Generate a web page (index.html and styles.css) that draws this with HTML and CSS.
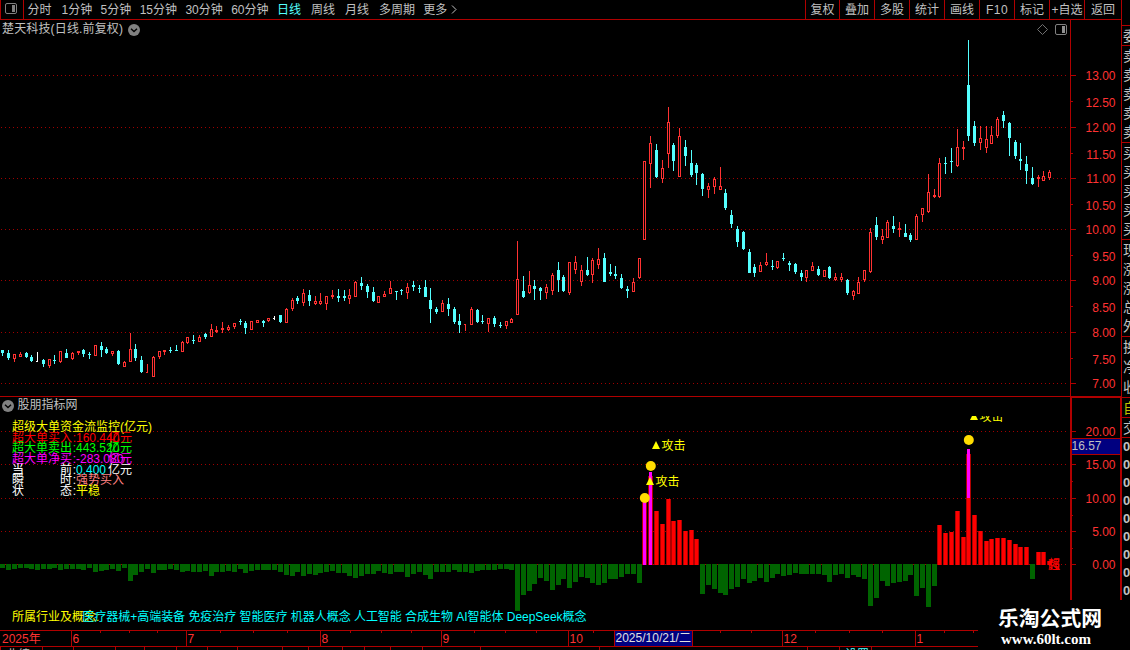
FILE: index.html
```
<!DOCTYPE html>
<html lang="zh-CN">
<head>
    <meta charset="UTF-8">
    <meta name="viewport" content="width=device-width, initial-scale=1.0">
    <title>楚天科技 日线</title>
    <link rel="stylesheet" href="styles.css">
</head>
<body>
    <div class="app">
        <div class="main">
            <div class="toolbar">
                <div class="layout-btn">
                    <svg width="12" height="11" viewBox="0 0 12 11"><rect x="0.5" y="0.5" width="11" height="10" rx="1.5" fill="none" stroke="#808080"/><rect x="7" y="2" width="3" height="7" fill="#808080"/></svg>
                </div>
                <div class="periods">
                    <span>分时</span>
                    <span>1分钟</span>
                    <span>5分钟</span>
                    <span>15分钟</span>
                    <span>30分钟</span>
                    <span>60分钟</span>
                    <span class="active">日线</span>
                    <span>周线</span>
                    <span>月线</span>
                    <span>多周期</span>
                    <span class="more">更多<svg width="6" height="9" viewBox="0 0 6 9"><path d="M1 0.5L5 4.5L1 8.5" fill="none" stroke="#c0c0c0"/></svg></span>
                </div>
                <div class="tools">
                    <span>复权</span>
                    <span>叠加</span>
                    <span>多股</span>
                    <span>统计</span>
                    <span>画线</span>
                    <span class="latin">F10</span>
                    <span>标记</span>
                    <span>+自选</span>
                    <span>返回</span>
                </div>
            </div>

            <div class="panel price-panel">
                <svg id="priceChart" width="1121" height="376" viewBox="0 20 1121 376"></svg>
                <div class="panel-title">
                    <span>楚天科技(日线.前复权)</span>
                    <svg width="12" height="12" viewBox="0 0 12 12"><circle cx="6" cy="6" r="6" fill="#808080"/><path d="M3 4.8L6 7.6L9 4.8" fill="none" stroke="#000" stroke-width="1.4"/></svg>
                </div>
                <div class="panel-icons">
                    <svg width="11" height="11" viewBox="0 0 11 11"><path d="M5.5 0.5L10.5 5.5L5.5 10.5L0.5 5.5Z" fill="none" stroke="#707070"/></svg>
                    <svg width="12" height="11" viewBox="0 0 12 11"><rect x="0.5" y="0.5" width="11" height="10" rx="1.5" fill="none" stroke="#808080"/><rect x="7" y="2" width="3" height="7" fill="#909090"/></svg>
                </div>
            </div>

            <div class="panel flow-panel">
                <svg id="flowChart" width="1121" height="233" viewBox="0 397 1121 233"></svg>
                <div class="panel-title flow-title">
                    <svg width="12" height="12" viewBox="0 0 12 12"><circle cx="6" cy="6" r="6" fill="#808080"/><path d="M3 4.8L6 7.6L9 4.8" fill="none" stroke="#000" stroke-width="1.4"/></svg>
                    <span>股朋指标网</span>
                </div>
                <div class="stats">
                    <div class="stat yellow">超级大单资金流监控(亿元)</div>
                    <div class="stat red"><b>超大单买入</b><i>:</i><em>160.440</em><u>亿元</u></div>
                    <div class="stat green"><b>超大单卖出</b><i>:</i><em>443.520</em><u>亿元</u></div>
                    <div class="stat magenta"><b>超大单净买</b><i>:</i><em>-283.080</em><u>亿元</u></div>
                    <div class="stat white"><b>当 前</b><i>:</i><em class="cyan">0.400</em><u>亿元</u></div>
                    <div class="stat white"><b>瞬 时</b><i>:</i><em class="salmon">强势买入</em></div>
                    <div class="stat white"><b>状 态</b><i>:</i><em class="yellow">平稳</em></div>
                </div>
                <div class="concepts">
                    <span class="yellow">所属行业及概念:</span>
                    <span class="concept-list">医疗器械+高端装备 免疫治疗 智能医疗 机器人概念 人工智能 合成生物 AI智能体 DeepSeek概念</span>
                </div>
            </div>

            <svg id="timeAxis" width="1121" height="20" viewBox="0 630 1121 20"></svg>
        </div>

        <div class="quote">
            <div class="group head"><span>委</span></div>
            <div class="group five"><span>卖</span><span>卖</span><span>卖</span><span>卖</span><span>卖</span></div>
            <div class="group five"><span>买</span><span>买</span><span>买</span><span>买</span><span>买</span></div>
            <div class="group five"><span>现</span><span>涨</span><span>涨</span><span>总</span><span>外</span></div>
            <div class="group three"><span>换</span><span>净</span><span>收</span></div>
            <div class="group tab yellow-dark"><span>自</span></div>
            <div class="group tab"><span>交</span></div>
            <div class="group ticks"><span>0</span><span>0</span><span>0</span><span>0</span><span>0</span><span>0</span><span>0</span><span>0</span><span>0</span></div>
        </div>

        <div class="brand">
            <div class="brand-name">乐淘公式网</div>
            <div class="brand-url">www.60lt.com</div>
        </div>
    </div>

    <script src="chart.js"></script>
</body>
</html>
```

FILE: styles.css
```
body {
    margin: 0;
    padding: 0;
    background-color: #000;
    color: #c0c0c0;
    font-family: "Liberation Sans", "Noto Sans CJK SC", sans-serif;
    font-size: 12px;
    line-height: 18px;
    overflow: hidden;
}

svg {
    display: block;
}

svg text {
    font-family: "Liberation Sans", "Noto Sans CJK SC", sans-serif;
    font-size: 12px;
}

.app {
    position: relative;
    display: grid;
    grid-template-columns: 1121px 9px;
    width: 1130px;
    height: 650px;
    overflow: hidden;
}

.main {
    display: flex;
    flex-direction: column;
}

/* toolbar */
.toolbar {
    display: flex;
    box-sizing: border-box;
    height: 20px;
    border-bottom: 1px solid #b00000;
    border-left: 1px solid #b00000;
    line-height: 20px;
    white-space: nowrap;
}

.layout-btn {
    width: 18px;
    padding: 3px 0 0 4px;
    border-right: 1px solid #b00000;
}

.periods {
    display: flex;
    flex: 1;
    padding-left: 3.5px;
}

.periods span {
    box-sizing: border-box;
    min-width: 34px;
    padding-right: 8.4px;
}

.periods .active {
    color: #54ffff;
}

.periods .more {
    display: flex;
    height: 19px;
    align-items: center;
    gap: 4px;
}

.tools {
    display: flex;
}

.tools span {
    width: 34px;
    border-left: 1px solid #b00000;
    text-align: center;
}

.tools span:first-child {
    width: 33px;
}

.tools span:last-child {
    width: 36px;
}

.tools .latin {
    letter-spacing: 0.5px;
}

/* chart panels */
.panel {
    position: relative;
}

.flow-panel {
    border-top: 1px solid #b00000;
}

.panel-title {
    position: absolute;
    top: 0;
    left: 2px;
    display: flex;
    align-items: center;
    gap: 5px;
    line-height: 19px;
}

.price-panel .panel-title {
    letter-spacing: 0.15px;
}

.panel-icons {
    position: absolute;
    top: 4px;
    left: 1037px;
    display: flex;
    gap: 7px;
}

.flow-title {
    top: -1px;
    gap: 3.5px;
}

.stats {
    position: absolute;
    top: 21px;
    left: 12px;
    white-space: nowrap;
}

.stat {
    display: flex;
    height: 10.7px;
}

.stat b {
    width: 60px;
    font-weight: normal;
    text-align-last: justify;
}

.stat i,
.stat em {
    font-style: normal;
}

.stat i {
    width: 4px;
    text-align: right;
}

.stat em {
    width: 32px;
}

.stat u {
    text-decoration: none;
}

.yellow { color: #ffff00; }
.red { color: #ff0000; }
.green { color: #00ff00; }
.magenta { color: #ff00ff; }
.white { color: #ffffff; }
.cyan { color: #00ffff; }
.salmon { color: #ff8080; }

.concepts {
    position: absolute;
    top: 211px;
    left: 12px;
    display: flex;
    white-space: nowrap;
}

.concept-list {
    margin-left: -17px;
    color: #00ffff;
    letter-spacing: -0.03px;
}

/* quote column, cut by the window edge */
.quote {
    display: flex;
    flex-direction: column;
    padding-top: 25px;
    border-left: 1px solid #b00000;
    overflow: hidden;
    font-size: 14px;
}

.group {
    display: flex;
    box-sizing: border-box;
    flex-direction: column;
    justify-content: space-around;
    flex: none;
    border-top: 1px solid #b00000;
    padding-left: 1px;
}

.group span {
    width: 14px;
    line-height: 18px;
}

.head { height: 20px; }
.five { height: 97px; }
.three { height: 61px; }
.tab { height: 20px; }
.yellow-dark { color: #c0c000; }

.ticks {
    height: 163px;
    justify-content: flex-start;
    font-size: 13px;
    font-weight: bold;
}

/* site label in the corner */
.brand {
    position: absolute;
    left: 978px;
    top: 600px;
    box-sizing: border-box;
    width: 152px;
    height: 50px;
    padding: 7px 0 0 20px;
    background-color: #000;
    color: #fff;
    font-weight: bold;
    white-space: nowrap;
}

.brand-name {
    font-size: 20.8px;
    line-height: 24px;
}

.brand-url {
    padding-left: 3px;
    font-family: "Liberation Serif", serif;
    font-size: 15px;
    line-height: 17px;
}
```

FILE: chart.js
```
const RED = '#ff3232';
const CYAN = '#54ffff';
const FRAME = '#b00000';
const GRID = '#a00000';
const COLORS = { r: RED, c: CYAN, w: '#ffffff' };

// one entry per day: colour, then high, body top, body bottom, low
const candles = `
c350,350,353,356 c350,353,358,360 r354,354,359,362 r352,354,357,357 c352,353,357,358 c355,357,361,362
w352,361,362,362 c359,360,364,367 r359,359,366,368 c355,360,361,364 r351,351,362,363 c349,353,358,358
r352,353,359,360 r351,351,353,355 c349,350,354,357 c352,354,355,359 r345,345,356,356 c342,346,350,357
c347,349,353,354 r351,351,354,356 c350,351,364,365 r361,362,367,367 r333,349,362,362 c344,349,358,361
c356,360,372,373 r364,372,373,373 r356,357,377,377 r351,351,357,359 r350,350,352,355 c347,350,351,353
c345,350,351,351 r341,342,352,352 r337,337,343,344 c335,340,341,344 r335,337,342,342 c333,334,337,339
r324,329,337,337 r326,330,332,333 r322,328,330,333 r325,327,330,331 r323,323,327,329 c319,321,322,325
c321,323,328,334 r321,321,330,330 r320,320,323,323 c320,321,323,327 r318,318,321,322 w316,318,319,320
c315,315,322,323 r308,309,323,323 r298,300,309,311 c296,298,301,304 r289,293,303,306 c290,295,301,306
r296,301,304,305 r293,301,304,305 r296,296,304,310 r290,295,297,299 c289,296,298,302 c290,296,298,301
r289,295,299,304 r281,282,297,297 c277,283,286,290 c284,286,292,298 c287,292,301,302 r296,296,303,303
r291,294,297,297 r281,288,294,294 c291,291,292,300 c289,290,291,295 r283,287,293,299 c281,285,287,291
c285,288,289,293 c280,287,297,297 c288,300,309,323 c307,309,312,314 r300,303,312,312 c298,304,309,316
c307,309,322,324 c314,321,325,333 r324,324,325,331 r307,309,325,325 c309,310,322,323 c315,321,322,324
r318,318,324,332 c316,318,324,327 c322,325,326,328 r321,321,326,329 r318,319,323,323 r241,279,315,315
c276,291,297,298 r271,285,293,294 c280,286,289,300 c287,288,291,300 r284,287,293,299 r273,275,291,295
c262,270,280,292 c275,277,291,292 r262,262,293,295 r256,262,270,274 r265,270,282,286 c257,270,275,276
r258,260,275,283 r248,259,265,269 c253,258,282,282 c264,272,274,276 c266,274,276,279 c274,278,288,289
c286,289,291,298 r278,282,292,292 r258,258,278,279 r161,161,240,240 r136,143,164,188 c144,150,177,178
r160,168,179,183 r107,122,154,168 c143,145,161,171 r128,136,177,177 c140,147,156,166 c150,163,175,177
c163,165,173,185 c173,174,189,196 r183,186,190,198 r177,179,187,194 r167,186,190,190 c189,193,208,210
c210,215,224,228 c226,229,242,247 c231,232,249,250 c249,252,273,273 c264,267,273,277 r262,265,272,272
r253,262,265,266 c260,266,267,270 r261,261,268,269 c253,258,259,261 c261,263,265,271 c263,264,272,274
c270,273,277,281 r270,270,278,282 r262,266,271,271 c266,269,275,276 r270,270,277,277 c266,267,278,279
r273,277,280,281 r273,277,280,282 c279,280,293,295 r290,291,296,300 r277,282,294,294 r270,270,280,282
r228,232,272,273 c217,225,237,240 r229,236,240,244 r220,222,238,238 c216,226,229,233 r222,228,230,237
c224,233,237,237 c233,235,240,242 r214,216,240,240 r208,208,215,222 r174,192,212,213 r189,195,197,198
r158,163,197,198 c157,163,164,174 c148,161,162,173 r129,147,166,167 r141,147,149,160 c40,85,136,141
c121,126,143,146 r126,138,143,150 r126,139,148,153 r126,135,144,144 r117,119,136,138 c111,115,121,128
c122,123,138,156 c140,142,156,159 c143,159,161,170 c156,164,171,184 c167,178,184,185 r175,177,179,187
r171,176,181,181 r170,172,178,180`.trim().split(/\s+/);

// money flow per day: bar end, above the zero line it is inflow
const flows = [
    568, 570, 569, 568, 568, 569, 570, 569, 569, 568, 570, 569, 569, 569, 570, 568, 572, 571, 570, 569,
    571, 568, 581, 575, 572, 569, 573, 570, 570, 569, 570, 572, 571, 572, 572, 571, 576, 572, 572, 571,
    572, 569, 573, 571, 570, 570, 570, 570, 572, 575, 576, 572, 576, 574, 575, 573, 572, 571, 573, 573,
    576, 578, 576, 574, 574, 571, 573, 574, 572, 572, 577, 574, 572, 575, 579, 572, 572, 572, 570, 572,
    572, 573, 571, 570, 570, 570, 569, 569, 570, 611, 595, 591, 584, 578, 581, 590, 585, 579, 588, 582,
    577, 578, 583, 585, 583, 579, 579, 577, 574, 574, 583, 500, 476, 511, 524, 499, 521, 520, 531, 530,
    539, 594, 585, 589, 593, 595, 589, 587, 579, 583, 581, 578, 582, 578, 574, 576, 575, 573, 574, 574,
    574, 574, 575, 582, 575, 574, 578, 575, 577, 579, 606, 598, 581, 586, 583, 582, 581, 575, 596, 588,
    607, 586, 525, 533, 532, 511, 537, 454, 515, 531, 541, 539, 538, 538, 540, 544, 547, 547, 579, 552,
    552, 561
];

const dayX = i => Math.floor(2.87 + 5.784 * i);

function rect(x, y, w, h, fill) {
    return `<rect x="${x}" y="${y}" width="${w}" height="${h}" fill="${fill}" shape-rendering="crispEdges"/>`;
}

function box(x, y, w, h, stroke) {
    return `<rect x="${x + 0.5}" y="${y + 0.5}" width="${w - 1}" height="${h - 1}" fill="#000" stroke="${stroke}" shape-rendering="crispEdges"/>`;
}

function gridLine(y) {
    return `<path d="M1 ${y + 0.5}H1068" stroke="${GRID}" stroke-dasharray="1 3" shape-rendering="crispEdges"/>`;
}

function label(x, y, text, fill, anchor = 'start') {
    return `<text x="${x}" y="${y}" fill="${fill}" text-anchor="${anchor}">${text}</text>`;
}

function drawPrice() {
    let out = '';
    [75, 127, 178, 229, 280, 332, 383].forEach(y => {
        out += gridLine(y) + rect(1071, y, 5, 1, FRAME);
    });
    [101, 153, 204, 255, 306, 358].forEach(y => {
        out += rect(1071, y, 2, 1, FRAME);
    });
    candles.forEach((c, i) => {
        const [high, top, bottom, low] = c.slice(1).split(',').map(Number);
        const color = COLORS[c[0]];
        const x = dayX(i);
        out += rect(x, high, 1, low - high, color);
        if (c[0] === 'w' || (c[0] === 'r' && bottom - top === 1)) {
            out += rect(x - 1, top, 1, 1, color);
        } else if (c[0] === 'r' && bottom - top > 2) {
            out += box(x - 1, top, 3, bottom - top, color);
        } else {
            out += rect(x - 1, top, 3, bottom - top, color);
        }
    });
    out += rect(1070, 20, 1, 376, FRAME);
    const ys = [75, 102, 127, 154, 178, 205, 229, 256, 280, 307, 332, 359, 383];
    ys.forEach((y, i) => {
        out += label(1115.5, y + 5, (13 - i * 0.5).toFixed(2), RED, 'end');
    });
    document.getElementById('priceChart').innerHTML = out;
}

function attack(x, y) {
    return `<path d="M${x} ${y + 4}L${x + 4} ${y - 4}L${x + 8} ${y + 4}Z" fill="#ffff00"/>` + label(x + 9.5, y + 5, '攻击', '#ffff00');
}

function drawFlow() {
    let out = '<clipPath id="below"><rect x="0" y="416" width="1121" height="214"/></clipPath>';
    [431, 464, 498, 531, 564].forEach((y, i) => {
        out += gridLine(y) + rect(1072, y, 4, 1, FRAME);
        out += label(1115.5, y + 5, (20 - i * 5).toFixed(2), RED, 'end');
    });
    [481, 515, 548].forEach(y => {
        out += rect(1072, y, 1, 1, FRAME);
    });
    flows.forEach((end, i) => {
        const x = dayX(i) - 2;
        if (end > 564) {
            out += rect(x, 564, 5, end - 564, '#006400');
        } else {
            out += rect(x, end, 5, 565 - end, '#b00000');
            out += rect(x + 1, end, 3, 565 - end, '#ff0000');
        }
    });
    // large order inflow
    out += rect(643, 500, 3, 65, '#ff00ff') + rect(649, 472, 3, 93, '#ff00ff') + rect(967, 449, 3, 49, '#ff00ff');
    [[644.8, 498], [650.8, 466], [968.8, 440]].forEach(([x, y]) => {
        out += `<circle cx="${x}" cy="${y}" r="5" fill="#ffdc00"/>`;
    });
    out += attack(652, 445) + attack(646, 481);
    out += `<g clip-path="url(#below)">${attack(970, 416)}</g>`;
    out += label(1048, 569, '超', '#ff0000') + label(1048, 569, '强', '#ff0000');

    out += rect(1070, 397, 2, 203, FRAME) + rect(1120, 397, 1, 203, FRAME) + rect(1070, 397, 51, 1, FRAME);
    out += rect(1072, 438, 48, 17, FRAME) + rect(1072, 439, 48, 15, '#000080');
    out += label(1071.5, 450, '16.57', '#c0c0c0');
    document.getElementById('flowChart').innerHTML = out;
}

function drawTime() {
    let out = rect(0, 630, 978, 1, FRAME) + rect(0, 646, 978, 1, FRAME);
    out += label(2, 643, '2025年', RED);
    [[71, '6'], [186, '7'], [320, '8'], [441, '9'], [568, '10'], [782, '12'], [915, '1']].forEach(([x, m]) => {
        out += rect(x, 630, 1, 16, FRAME) + label(x + 1.5, 643, m, RED);
    });
    [100, 129, 157, 220, 253, 287, 350, 381, 411, 474, 505, 536, 593, 720, 751, 815, 849, 882, 944, 973].forEach(x => {
        out += rect(x, 631, 1, 2, FRAME);
    });
    [0, 42, 73, 115, 144, 176, 207, 237, 282, 308, 342, 364, 390, 422, 480, 599, 807, 839, 871].forEach(x => {
        out += rect(x, 647, 1, 3, FRAME);
    });
    out += rect(614, 630, 79, 16, FRAME) + rect(615, 631, 77, 15, '#000080');
    out += label(615.5, 642, '2025/10/21/二', '#e0e0e0');
    out += label(6, 659, '业绩', '#c0c0c0') + label(845, 659, '设置', CYAN);
    document.getElementById('timeAxis').innerHTML = out;
}

drawPrice();
drawFlow();
drawTime();
```
